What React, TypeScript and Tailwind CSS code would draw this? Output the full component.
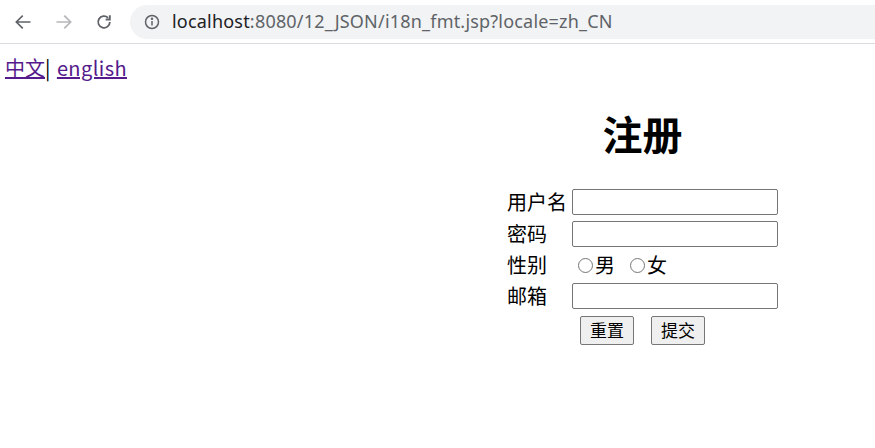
import React from "react";

const cjk = { fontFamily: '"Microsoft YaHei", "Noto Sans CJK SC", "Noto Sans", sans-serif' };

function Radio() {
  return <span className="block shrink-0 w-[15px] h-[15px] min-w-[15px] rounded-full border border-[#767676] bg-white mr-[2px]" />;
}

export default function App() {
  return (
    <div className="w-[875px] h-[448px] bg-white overflow-hidden" style={cjk}>
      {/* browser chrome */}
      <div className="h-[44px] flex items-center border-b border-[#dadce0]">
        <div className="w-[44px] flex justify-center pl-[1px]">
          <svg width="20" height="20" viewBox="0 0 24 24" fill="none" stroke="#5f6368" strokeWidth="2" strokeLinecap="square">
            <path d="M20 12H5M11 5l-7 7 7 7" />
          </svg>
        </div>
        <div className="w-[40px] flex justify-center">
          <svg width="20" height="20" viewBox="0 0 24 24" fill="none" stroke="#b4b6b8" strokeWidth="2" strokeLinecap="square">
            <path d="M4 12h15M13 5l7 7-7 7" />
          </svg>
        </div>
        <div className="w-[40px] flex justify-center">
          <svg width="20" height="20" viewBox="0 0 24 24" fill="none" stroke="#5f6368" strokeWidth="2.2">
            <path d="M19 12a7 7 0 1 1-2.05-4.95" />
            <path d="M19 4v5h-5" fill="none" />
          </svg>
        </div>
        <div className="ml-[6px] flex-1 h-[34px] rounded-l-full bg-[#f1f3f4] flex items-center pl-[14px]">
          <svg width="16" height="16" viewBox="0 0 16 16" fill="none" stroke="#5f6368" strokeWidth="1.5">
            <circle cx="8" cy="8" r="6.5" />
            <path d="M8 7v4.5" />
            <circle cx="8" cy="4.8" r="0.5" fill="#5f6368" />
          </svg>
          <span className="ml-[12px] text-[18px] tracking-[0.2px]" style={{ fontFamily: '"Microsoft YaHei", "Noto Sans", sans-serif' }}>
            <span className="text-[#202124]">localhost</span>
            <span className="text-[#5f6368]">:8080/12_JSON/i18n_fmt.jsp?locale=zh_CN</span>
          </span>
        </div>
      </div>

      {/* links */}
      <div className="pl-[5px] pt-[10px] text-[20px] leading-[28px]">
        <a href="#" className="underline text-[#551a8b]">中文</a>
        <span>|</span>{" "}
        <a href="#" className="underline text-[#551a8b] ml-[2px] tracking-[0.4px]">english</a>
      </div>

      {/* form */}
      <div className="pl-[505px] pt-[25px]">
        <div className="w-[275px] text-center text-[40px] font-bold leading-[52px] text-black">注册</div>
        <div className="mt-[27px] text-[20px] text-black">
          <div className="flex items-center h-[32px]">
            <span className="w-[67px] pl-[2px]">用户名</span>
            <input className="shrink-0 w-[206px] h-[26px] border border-[#767676] rounded-[2px] bg-white" />
          </div>
          <div className="flex items-center h-[32px]">
            <span className="w-[67px] pl-[2px]">密码</span>
            <input type="password" className="shrink-0 w-[206px] h-[26px] border border-[#767676] rounded-[2px] bg-white" />
          </div>
          <div className="flex items-center h-[30px]">
            <span className="w-[73px] pl-[2px]">性别</span>
            <span className="flex items-center"><Radio />男</span>
            <span className="flex items-center ml-[15px]"><Radio />女</span>
          </div>
          <div className="flex items-center h-[32px]">
            <span className="w-[67px] pl-[2px]">邮箱</span>
            <input className="shrink-0 w-[206px] h-[26px] border border-[#767676] rounded-[2px] bg-white" />
          </div>
          <div className="flex items-center h-[36px] pl-[75px] gap-[17px]">
            <button className="w-[54px] h-[29px] border border-[#767676] rounded-[2px] bg-[#efefef] text-[17px]">重置</button>
            <button className="w-[54px] h-[29px] border border-[#767676] rounded-[2px] bg-[#efefef] text-[17px]">提交</button>
          </div>
        </div>
      </div>
    </div>
  );
}
